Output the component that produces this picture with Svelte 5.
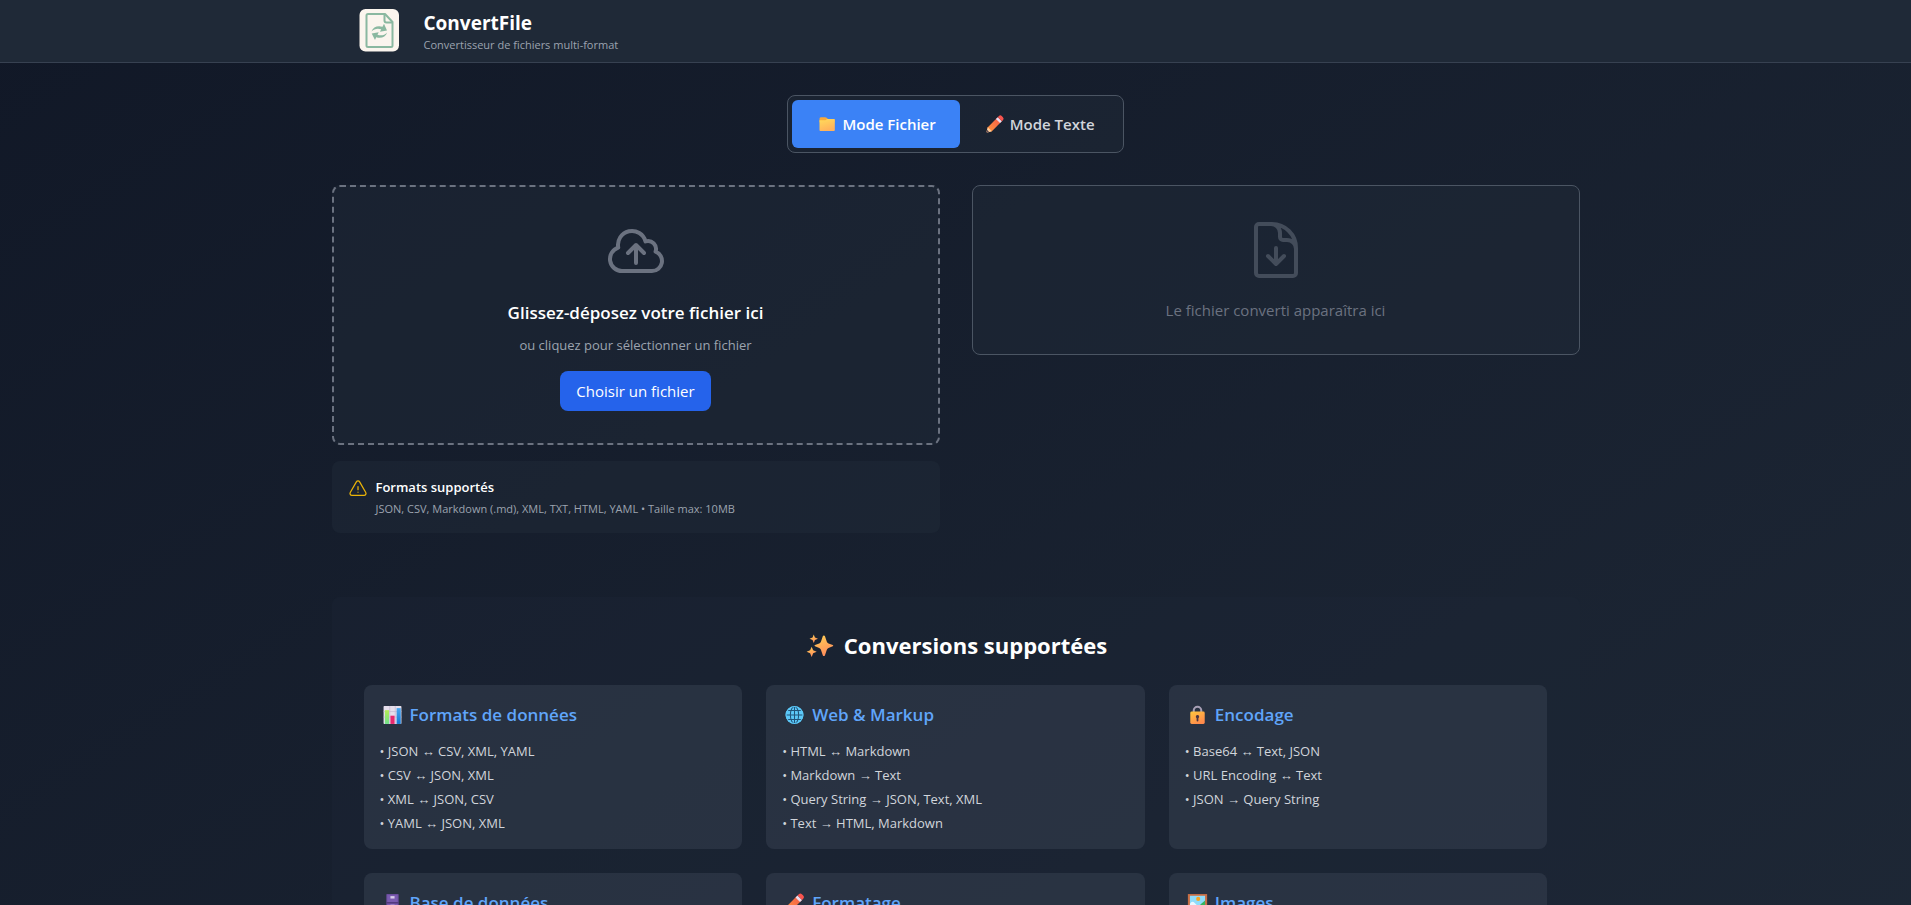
<script lang="ts">
  type Mode = "file" | "text";

  interface Category {
    icon: string;
    title: string;
    items: string[];
  }

  let mode: Mode = "file";
  let fileInput: HTMLInputElement;

  const categories: Category[] = [
    {
      icon: "chart",
      title: "Formats de données",
      items: ["JSON ↔ CSV, XML, YAML", "CSV ↔ JSON, XML", "XML ↔ JSON, CSV", "YAML ↔ JSON, XML"],
    },
    {
      icon: "globe",
      title: "Web & Markup",
      items: [
        "HTML ↔ Markdown",
        "Markdown → Text",
        "Query String → JSON, Text, XML",
        "Text → HTML, Markdown",
      ],
    },
    {
      icon: "lock",
      title: "Encodage",
      items: ["Base64 ↔ Text, JSON", "URL Encoding ↔ Text", "JSON → Query String"],
    },
    { icon: "cabinet", title: "Base de données", items: [] },
    { icon: "pencil", title: "Formatage", items: [] },
    { icon: "picture", title: "Images", items: [] },
  ];

  function openPicker() {
    fileInput.click();
  }
</script>

<svelte:head>
  <title>ConvertFile</title>
</svelte:head>

<!-- Shared gradients and emoji symbols -->
<svg class="sprite" aria-hidden="true">
  <defs>
    <linearGradient id="g-folder" x1="0" y1="0" x2="0.4" y2="1">
      <stop offset="0" stop-color="#ffdc5a" />
      <stop offset="1" stop-color="#ffb25c" />
    </linearGradient>
    <linearGradient id="g-pencil" x1="1" y1="0" x2="0" y2="1">
      <stop offset="0" stop-color="#f4574a" />
      <stop offset="1" stop-color="#ff9a3d" />
    </linearGradient>
    <linearGradient id="g-star" x1="0.2" y1="0" x2="0.6" y2="1">
      <stop offset="0" stop-color="#ffcf55" />
      <stop offset="1" stop-color="#ff8a5c" />
    </linearGradient>
    <linearGradient id="g-lock" x1="0" y1="0" x2="0.6" y2="1">
      <stop offset="0" stop-color="#ffc83d" />
      <stop offset="1" stop-color="#ff8a4c" />
    </linearGradient>
    <linearGradient id="g-green" x1="0" y1="0" x2="0" y2="1">
      <stop offset="0" stop-color="#b5ec55" />
      <stop offset="1" stop-color="#6fe08a" />
    </linearGradient>
    <linearGradient id="g-blue" x1="0" y1="0" x2="0" y2="1">
      <stop offset="0" stop-color="#4aa8f0" />
      <stop offset="1" stop-color="#1278d4" />
    </linearGradient>
  </defs>

  <symbol id="folder" viewBox="0 0 32 32">
    <path fill="#f9a93a" d="M4 7.500Q4 5 6 5h7q1.500 0 2.500 1l2 2H28v5H4z" />
    <path fill="url(#g-folder)" d="M4 10h9.500l3-2H27q1.500 0 1.500 1.500v16q0 1.500-1.500 1.500H5.500Q4 27 4 25.500z" />
  </symbol>

  <symbol id="pencil" viewBox="0 0 32 32">
    <path fill="url(#g-pencil)" d="M20 5.500 26.500 12 11 27.500 3.500 29.500 2.500 28.500 4.500 21z" />
    <path fill="#e9dff0" d="M17.500 8 20.500 5l6.500 6.500-3 3z" />
    <path fill="#f8544e" d="m20.500 5 1.700-1.700q2.300-2.300 4.600 0l1.900 1.900q2.300 2.300 0 4.600L27 11.500z" />
    <path fill="#ffcf9c" d="M4.500 21 11 27.500 3.500 29.500 2.500 28.500z" />
    <path fill="#5b4a55" d="M3.400 25.300 6.700 28.600 2.500 30 2 29.500z" />
  </symbol>

  <symbol id="sparkles" viewBox="0 0 32 32">
    <g fill="url(#g-star)">
      <path d="M20 4q1 0 1.300 1l2.200 6.500q.5 1.500 2 2l5 2q1.500.5 0 1.500l-5 2q-1.500.5-2 2L21.300 27.500q-.3 1-1.300 1t-1.300-1L16.500 21q-.5-1.500-2-2l-5-2q-1.500-1 0-1.500l5-2q1.500-.5 2-2L18.700 5q.3-1 1.300-1z" />
      <path d="M8 3 9.400 6.600 13 8 9.400 9.400 8 13 6.600 9.400 3 8 6.600 6.600z" />
      <path d="M5.500 17.500 7.300 21.700 11.500 23.500 7.300 25.300 5.500 29.500 3.700 25.300-.5 23.500 3.700 21.700z" />
    </g>
  </symbol>

  <symbol id="chart" viewBox="0 0 32 32">
    <rect x="3" y="3" width="26" height="26" rx="1" fill="#e6dfec" />
    <path stroke="#c5b8d2" stroke-width="1" d="M3 11h26M3 19h26M12 3v26M20 3v26" />
    <rect x="5" y="9" width="6" height="20" fill="url(#g-green)" />
    <rect x="13" y="17" width="6" height="12" fill="#e8286e" />
    <rect x="22" y="6" width="6" height="23" fill="url(#g-blue)" />
  </symbol>

  <symbol id="globe" viewBox="0 0 32 32">
    <circle cx="16" cy="16" r="13" fill="#5cc8f8" />
    <g fill="none" stroke="#21547a" stroke-width="1.500">
      <ellipse cx="16" cy="16" rx="6" ry="12.500" />
      <path d="M16 3v26M3 16h26M5.500 9.500h21M5.500 22.500h21" />
    </g>
    <circle cx="16" cy="16" r="12.300" fill="none" stroke="#5cc8f8" stroke-width="1.500" />
  </symbol>

  <symbol id="lock" viewBox="0 0 32 32">
    <path fill="none" stroke="#a79fb5" stroke-width="3" d="M10.500 13V9.500a5.500 5.500 0 0 1 11 0V13" />
    <rect x="5.500" y="11" width="21" height="18" rx="2" fill="url(#g-lock)" />
    <path fill="#4a3540" d="M16 16a2.500 2.500 0 0 1 1.300 4.600V24a1.300 1.300 0 0 1-2.600 0v-3.400A2.500 2.500 0 0 1 16 16z" />
  </symbol>

  <symbol id="cabinet" viewBox="0 0 32 32">
    <rect x="7" y="3" width="18" height="26" rx="1" fill="#6a4c9c" />
    <rect x="8.500" y="4.500" width="15" height="10" fill="#7a5bb0" />
    <rect x="8.500" y="17" width="15" height="10" fill="#7a5bb0" />
    <rect x="13" y="6" width="6" height="3.500" fill="#d9cdea" />
    <rect x="13" y="18.500" width="6" height="3.500" fill="#d9cdea" />
    <path stroke="#4b3575" stroke-width="1.500" d="M7 15.700h18" />
  </symbol>

  <symbol id="picture" viewBox="0 0 32 32">
    <rect x="2" y="3" width="28" height="26" fill="#c96f45" />
    <rect x="5" y="5.500" width="22" height="21" fill="#8fdcfa" />
    <circle cx="17" cy="10" r="3" fill="#f5a524" />
    <path fill="#e9f8ff" d="M5 17q3-5 7-1l4 4-4 7H5z" />
    <path fill="#35b560" d="m13 26.500 8-9 6-5v14z" />
  </symbol>
</svg>

<div class="app">
  <header>
    <div class="header-inner">
      <svg class="logo" viewBox="0 0 64 44" role="img" aria-label="ConvertFile">
        <rect x="11.500" y="0" width="39.500" height="42.500" rx="6" fill="#fbf5ee" />
        <g fill="none" stroke="#8ab8a0" stroke-width="2" stroke-linejoin="round">
          <path d="M20 5h17l7.500 8v23.500q0 1.500-1.500 1.500H20q-1.500 0-1.500-1.500v-30Q18.500 5 20 5z" />
          <path d="M36.500 5v6.500q0 2 2 2h6" />
        </g>
        <g fill="#8ab8a0">
          <path d="M23.500 22.500c1.500-4.500 6-6.300 11-4.800l1.500-3 3 6.800-7 1.300 1.200-2.600c-3.700-1.200-7-.5-9.700 2.300z" />
          <path d="M39.200 23.500c-1.500 4.500-6 6.300-11 4.800l-1.200 2.700-3.300-6.500 7-1.300-1.200 2.600c3.700 1.200 7 .5 9.700-2.300z" />
        </g>
      </svg>
      <div>
        <h1>ConvertFile</h1>
        <p class="tagline">Convertisseur de fichiers multi-format</p>
      </div>
    </div>
  </header>

  <main>
    <div class="tabs">
      <button class:active={mode === "file"} on:click={() => (mode = "file")}>
        <svg class="emoji" aria-hidden="true"><use href="#folder" /></svg>
        Mode Fichier
      </button>
      <button class:active={mode === "text"} on:click={() => (mode = "text")}>
        <svg class="emoji" aria-hidden="true"><use href="#pencil" /></svg>
        Mode Texte
      </button>
    </div>

    <div class="workspace">
      <div class="left">
        <div class="dropzone">
          <svg class="icon-lg" viewBox="0 0 24 24" aria-hidden="true">
            <path d="M12 16.500V9.750m0 0 3 3m-3-3-3 3M6.750 19.500a4.500 4.500 0 0 1-1.410-8.775 5.250 5.250 0 0 1 10.233-2.330 3 3 0 0 1 3.758 3.848A3.752 3.752 0 0 1 18 19.500H6.750z" />
          </svg>
          <h3>Glissez-déposez votre fichier ici</h3>
          <p>ou cliquez pour sélectionner un fichier</p>
          <button class="choose" on:click={openPicker}>Choisir un fichier</button>
          <input
            bind:this={fileInput}
            type="file"
            accept=".json,.csv,.md,.xml,.txt,.html,.yaml"
            aria-label="Choisir un fichier"
            hidden
          />
        </div>

        <div class="notice">
          <svg class="warning" viewBox="0 0 24 24" aria-hidden="true">
            <path d="M12 9v3.750m-9.303 3.376c-.866 1.500.217 3.374 1.948 3.374h14.710c1.730 0 2.813-1.874 1.948-3.374L13.949 3.378c-.866-1.500-3.032-1.500-3.898 0L2.697 16.126zM12 15.750h.007v.008H12v-.008z" />
          </svg>
          <div>
            <h4>Formats supportés</h4>
            <p>JSON, CSV, Markdown (.md), XML, TXT, HTML, YAML • Taille max: 10MB</p>
          </div>
        </div>
      </div>

      <div class="result">
        <svg class="icon-lg" viewBox="0 0 24 24" aria-hidden="true">
          <path d="M19.500 14.250v-2.625a3.375 3.375 0 0 0-3.375-3.375h-1.500A1.125 1.125 0 0 1 13.500 7.125v-1.500a3.375 3.375 0 0 0-3.375-3.375H8.250m.750 12 3 3m0 0 3-3m-3 3v-6m-1.500-9H5.625c-.621 0-1.125.504-1.125 1.125v17.250c0 .621.504 1.125 1.125 1.125h12.750c.621 0 1.125-.504 1.125-1.125V11.250a9 9 0 0 0-9-9z" />
        </svg>
        <p>Le fichier converti apparaîtra ici</p>
      </div>
    </div>

    <section class="conversions">
      <h2>
        <svg class="emoji" aria-hidden="true"><use href="#sparkles" /></svg>
        Conversions supportées
      </h2>
      <div class="grid">
        {#each categories as category}
          <article>
            <h3>
              <svg class="emoji" aria-hidden="true"><use href="#{category.icon}" /></svg>
              {category.title}
            </h3>
            <ul>
              {#each category.items as item}
                <li>• {item}</li>
              {/each}
            </ul>
          </article>
        {/each}
      </div>
    </section>
  </main>
</div>

<style>
  :global(body) {
    margin: 0;
    background: #111827;
  }

  .app {
    height: 100vh;
    overflow-y: auto;
    scrollbar-width: none;
    color: #fff;
    font-family: "Segoe UI", "Open Sans", "Noto Sans", sans-serif;
    font-size: 15px;
    line-height: 24px;
    /* local: the gradient runs over the whole scrolled page */
    background: linear-gradient(to bottom right, #111827, #1f2937) local;
  }

  .sprite {
    position: absolute;
    width: 0;
    height: 0;
  }

  h1,
  h2,
  h3,
  h4,
  p,
  ul {
    margin: 0;
    padding: 0;
  }

  button {
    border: 0;
    font: inherit;
    color: inherit;
    cursor: pointer;
  }

  header {
    background: #1f2937;
    border-bottom: 1px solid #374151;
  }

  .header-inner {
    display: flex;
    align-items: center;
    gap: 12px;
    max-width: 1216px;
    margin: 0 auto;
    padding: 9px 32px;
  }

  .logo {
    width: 64px;
    height: 44px;
  }

  h1 {
    font-size: 19px;
    font-weight: 700;
    line-height: 28px;
  }

  .tagline {
    color: #9ca3af;
    font-size: 11px;
    line-height: 16px;
  }

  main {
    max-width: 1248px;
    margin: 0 auto;
    padding: 32px 16px 128px;
  }

  .tabs {
    display: flex;
    width: fit-content;
    margin: 0 auto 32px;
    padding: 4px;
    border: 1px solid #4b5563;
    border-radius: 8px;
    background: rgba(31, 41, 55, 0.5);
  }

  .tabs button {
    display: flex;
    align-items: center;
    gap: 4px;
    padding: 12px 24px;
    border-radius: 6px;
    background: transparent;
    color: #d1d5db;
    font-weight: 600;
  }

  .tabs button.active {
    background: #3b82f6;
    color: #fff;
  }

  .emoji {
    flex: none;
    width: 22px;
    height: 20px;
  }

  .workspace {
    display: grid;
    grid-template-columns: 1fr 1fr;
    align-items: start;
    gap: 32px;
  }

  .dropzone,
  .result {
    padding: 32px;
    border-radius: 8px;
    background: rgba(31, 41, 55, 0.5);
    text-align: center;
  }

  .dropzone {
    border: 2px dashed #6b7280;
  }

  .result {
    border: 1px solid #4b5563;
    color: #6b7280;
  }

  .icon-lg {
    display: block;
    width: 64px;
    height: 64px;
    margin: 0 auto 16px;
    fill: none;
    stroke: #6b7280;
    stroke-width: 1.5;
    stroke-linecap: round;
    stroke-linejoin: round;
  }

  .result .icon-lg {
    stroke: #434c5a;
  }

  .dropzone h3 {
    margin-bottom: 8px;
    font-size: 17px;
    font-weight: 600;
    line-height: 28px;
  }

  .dropzone p {
    margin-bottom: 16px;
    color: #9ca3af;
    font-size: 13px;
    line-height: 20px;
  }

  .choose {
    display: block;
    margin: 0 auto;
    padding: 8px 16px;
    border-radius: 8px;
    background: #2563eb;
  }

  .notice {
    display: flex;
    gap: 8px;
    margin-top: 16px;
    padding: 16px;
    border-radius: 8px;
    background: rgba(31, 41, 55, 0.5);
  }

  .warning {
    flex: none;
    width: 20px;
    height: 20px;
    margin-top: 2px;
    fill: none;
    stroke: #eab308;
    stroke-width: 1.5;
    stroke-linecap: round;
    stroke-linejoin: round;
  }

  .notice h4 {
    margin-bottom: 4px;
    font-size: 13px;
    font-weight: 600;
    line-height: 20px;
  }

  .notice p {
    color: #9ca3af;
    font-size: 11px;
    line-height: 16px;
  }

  .conversions {
    margin-top: 64px;
    padding: 32px;
    border-radius: 8px;
    background: rgba(31, 41, 55, 0.3);
  }

  h2 {
    display: flex;
    align-items: center;
    justify-content: center;
    gap: 7px;
    margin-bottom: 24px;
    font-size: 22px;
    font-weight: 700;
    line-height: 32px;
  }

  h2 .emoji {
    width: 33px;
    height: 27px;
  }

  .grid {
    display: grid;
    grid-template-columns: repeat(3, 1fr);
    gap: 24px;
  }

  article {
    min-height: 132px;
    padding: 16px;
    border-radius: 8px;
    background: rgba(55, 65, 81, 0.5);
  }

  article h3 {
    display: flex;
    align-items: center;
    gap: 5px;
    margin-bottom: 12px;
    color: #60a5fa;
    font-size: 17px;
    font-weight: 600;
    line-height: 28px;
  }

  article .emoji {
    width: 25px;
    height: 22px;
  }

  ul {
    display: flex;
    flex-direction: column;
    gap: 4px;
    color: #d1d5db;
    font-size: 13px;
    line-height: 20px;
    list-style: none;
  }
</style>
